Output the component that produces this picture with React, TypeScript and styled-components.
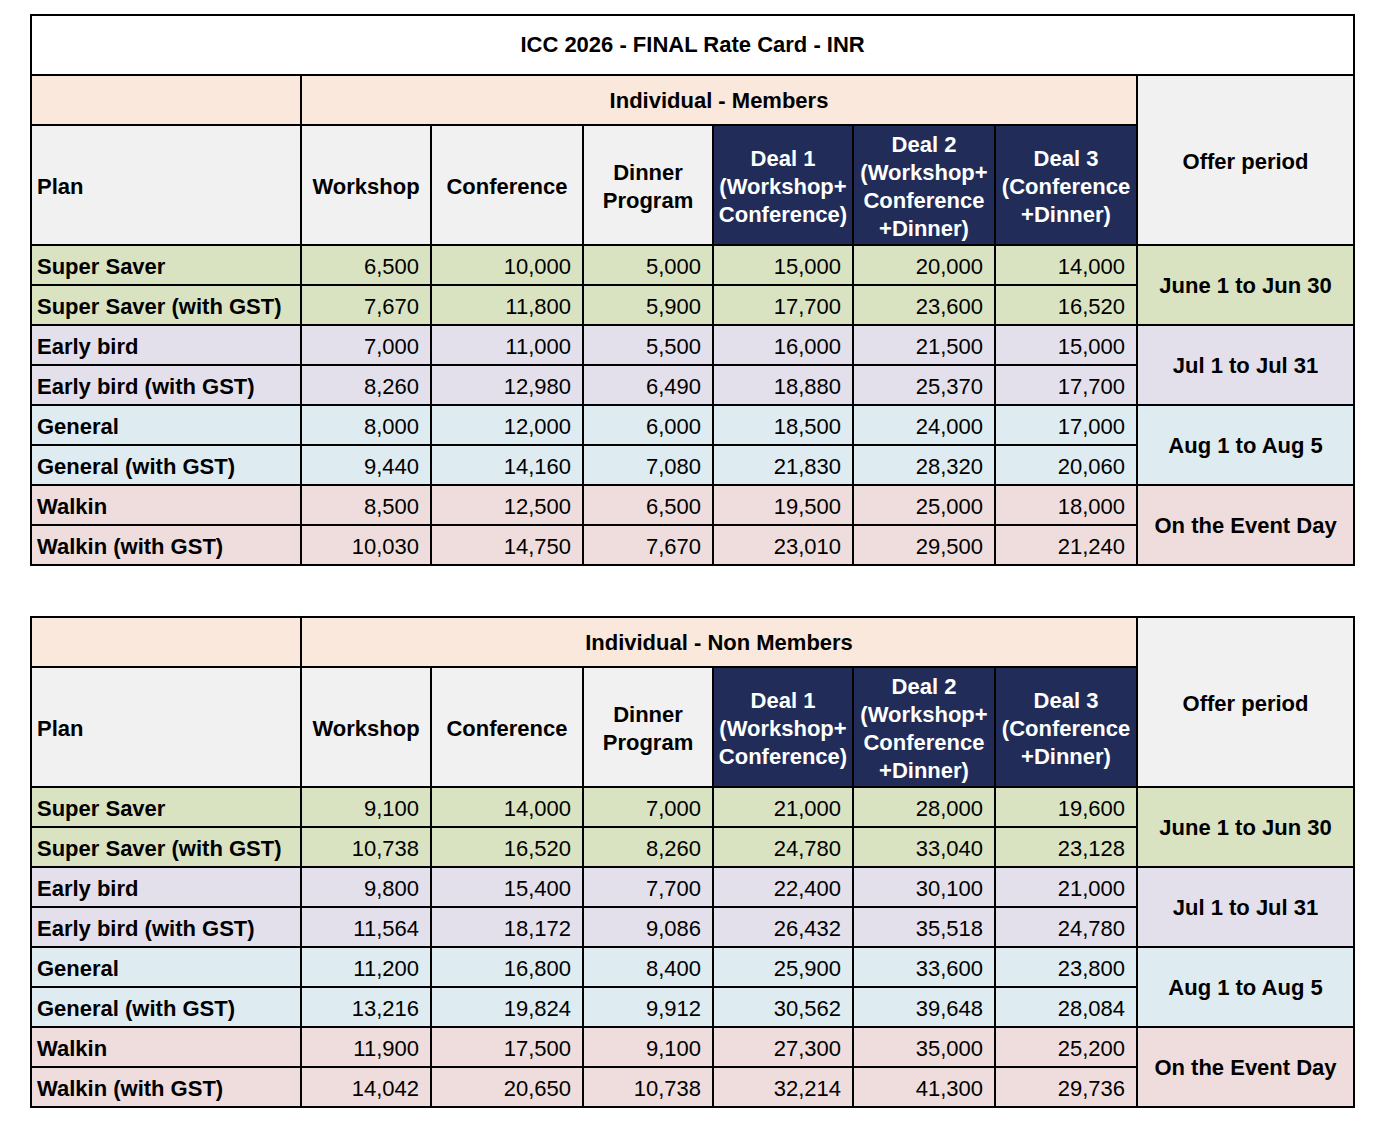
import { FunctionComponent, Fragment } from "react";
import styled, { createGlobalStyle } from "styled-components";

const GlobalStyle = createGlobalStyle`
  body {
    margin: 0;
    background: #fff;
    font-family: "Liberation Sans", Arial, Helvetica, sans-serif;
    color: #000;
  }
`;

type Tone = "green" | "lavender" | "blue" | "pink";

const toneColors: Record<Tone, string> = {
  green: "#d9e3c2",
  lavender: "#e3dfeb",
  blue: "#deebf0",
  pink: "#efdcdc",
};

const Sheet = styled.div`
  display: flex;
  flex-direction: column;
  gap: 50px;
  padding: 14px 0 0 30px;
`;

const RateTable = styled.table`
  width: 1323px;
  table-layout: fixed;
  border-collapse: collapse;
  font-size: 22px;
  td,
  th {
    border: 2px solid #000;
    box-sizing: border-box;
  }
`;

const TitleCell = styled.th`
  height: 60px;
  background: #fff;
  font-weight: 700;
  text-align: center;
`;

const GroupRow = styled.tr`
  height: 50px;
`;

const GroupCell = styled.th`
  background: #f9e8db;
  font-weight: 700;
  text-align: center;
  padding-top: 2px;
`;

const HeadRow = styled.tr`
  height: 120px;
`;

const HeadCell = styled.th<{ $deal?: boolean; $left?: boolean }>`
  background: ${(p) => (p.$deal ? "#212d58" : "#f1f1f1")};
  color: ${(p) => (p.$deal ? "#fff" : "#000")};
  font-weight: 700;
  line-height: 28px;
  text-align: ${(p) => (p.$left ? "left" : "center")};
  padding: 3px ${(p) => (p.$left ? "5px" : "2px")} 0;
  vertical-align: middle;
`;

const DataRow = styled.tr<{ $tone: Tone }>`
  height: 40px;
  background: ${(p) => toneColors[p.$tone]};
`;

const PlanCell = styled.td`
  font-weight: 700;
  text-align: left;
  padding: 4px 5px 0;
  white-space: nowrap;
`;

const NumCell = styled.td`
  text-align: right;
  padding: 4px 11px 0 0;
`;

const PeriodCell = styled.td`
  font-weight: 700;
  text-align: center;
  padding-top: 2px;
`;

type Plan = {
  period: string;
  tone: Tone;
  rows: [string, string[]][];
};

const members: Plan[] = [
  {
    period: "June 1 to Jun 30",
    tone: "green",
    rows: [
      ["Super Saver", ["6,500", "10,000", "5,000", "15,000", "20,000", "14,000"]],
      ["Super Saver (with GST)", ["7,670", "11,800", "5,900", "17,700", "23,600", "16,520"]],
    ],
  },
  {
    period: "Jul 1 to Jul 31",
    tone: "lavender",
    rows: [
      ["Early bird", ["7,000", "11,000", "5,500", "16,000", "21,500", "15,000"]],
      ["Early bird (with GST)", ["8,260", "12,980", "6,490", "18,880", "25,370", "17,700"]],
    ],
  },
  {
    period: "Aug 1 to Aug 5",
    tone: "blue",
    rows: [
      ["General", ["8,000", "12,000", "6,000", "18,500", "24,000", "17,000"]],
      ["General (with GST)", ["9,440", "14,160", "7,080", "21,830", "28,320", "20,060"]],
    ],
  },
  {
    period: "On the Event Day",
    tone: "pink",
    rows: [
      ["Walkin", ["8,500", "12,500", "6,500", "19,500", "25,000", "18,000"]],
      ["Walkin (with GST)", ["10,030", "14,750", "7,670", "23,010", "29,500", "21,240"]],
    ],
  },
];

const nonMembers: Plan[] = [
  {
    period: "June 1 to Jun 30",
    tone: "green",
    rows: [
      ["Super Saver", ["9,100", "14,000", "7,000", "21,000", "28,000", "19,600"]],
      ["Super Saver (with GST)", ["10,738", "16,520", "8,260", "24,780", "33,040", "23,128"]],
    ],
  },
  {
    period: "Jul 1 to Jul 31",
    tone: "lavender",
    rows: [
      ["Early bird", ["9,800", "15,400", "7,700", "22,400", "30,100", "21,000"]],
      ["Early bird (with GST)", ["11,564", "18,172", "9,086", "26,432", "35,518", "24,780"]],
    ],
  },
  {
    period: "Aug 1 to Aug 5",
    tone: "blue",
    rows: [
      ["General", ["11,200", "16,800", "8,400", "25,900", "33,600", "23,800"]],
      ["General (with GST)", ["13,216", "19,824", "9,912", "30,562", "39,648", "28,084"]],
    ],
  },
  {
    period: "On the Event Day",
    tone: "pink",
    rows: [
      ["Walkin", ["11,900", "17,500", "9,100", "27,300", "35,000", "25,200"]],
      ["Walkin (with GST)", ["14,042", "20,650", "10,738", "32,214", "41,300", "29,736"]],
    ],
  },
];

const colWidths = [270, 130, 152, 130, 140, 142, 142, 217];

const RateCard: FunctionComponent<{ title?: string; group: string; plans: Plan[] }> = ({
  title,
  group,
  plans,
}) => (
  <RateTable>
    <colgroup>
      {colWidths.map((w, i) => (
        <col key={i} style={{ width: w }} />
      ))}
    </colgroup>
    <thead>
      {title && (
        <tr>
          <TitleCell colSpan={8}>{title}</TitleCell>
        </tr>
      )}
      <GroupRow>
        <GroupCell />
        <GroupCell colSpan={6}>{group}</GroupCell>
        <HeadCell rowSpan={2}>Offer period</HeadCell>
      </GroupRow>
      <HeadRow>
        <HeadCell $left>Plan</HeadCell>
        <HeadCell>Workshop</HeadCell>
        <HeadCell>Conference</HeadCell>
        <HeadCell>
          Dinner
          <br />
          Program
        </HeadCell>
        <HeadCell $deal>
          Deal 1<br />
          (Workshop+
          <br />
          Conference)
        </HeadCell>
        <HeadCell $deal>
          Deal 2<br />
          (Workshop+
          <br />
          Conference
          <br />
          +Dinner)
        </HeadCell>
        <HeadCell $deal>
          Deal 3<br />
          (Conference
          <br />
          +Dinner)
        </HeadCell>
      </HeadRow>
    </thead>
    <tbody>
      {plans.map((plan) => (
        <Fragment key={plan.period}>
          {plan.rows.map(([name, values], i) => (
            <DataRow key={name} $tone={plan.tone}>
              <PlanCell>{name}</PlanCell>
              {values.map((v, j) => (
                <NumCell key={j}>{v}</NumCell>
              ))}
              {i === 0 && <PeriodCell rowSpan={2}>{plan.period}</PeriodCell>}
            </DataRow>
          ))}
        </Fragment>
      ))}
    </tbody>
  </RateTable>
);

const App: FunctionComponent = () => (
  <>
    <GlobalStyle />
    <Sheet>
      <RateCard
        title="ICC 2026 - FINAL Rate Card - INR"
        group="Individual - Members"
        plans={members}
      />
      <RateCard group="Individual - Non Members" plans={nonMembers} />
    </Sheet>
  </>
);

export default App;
